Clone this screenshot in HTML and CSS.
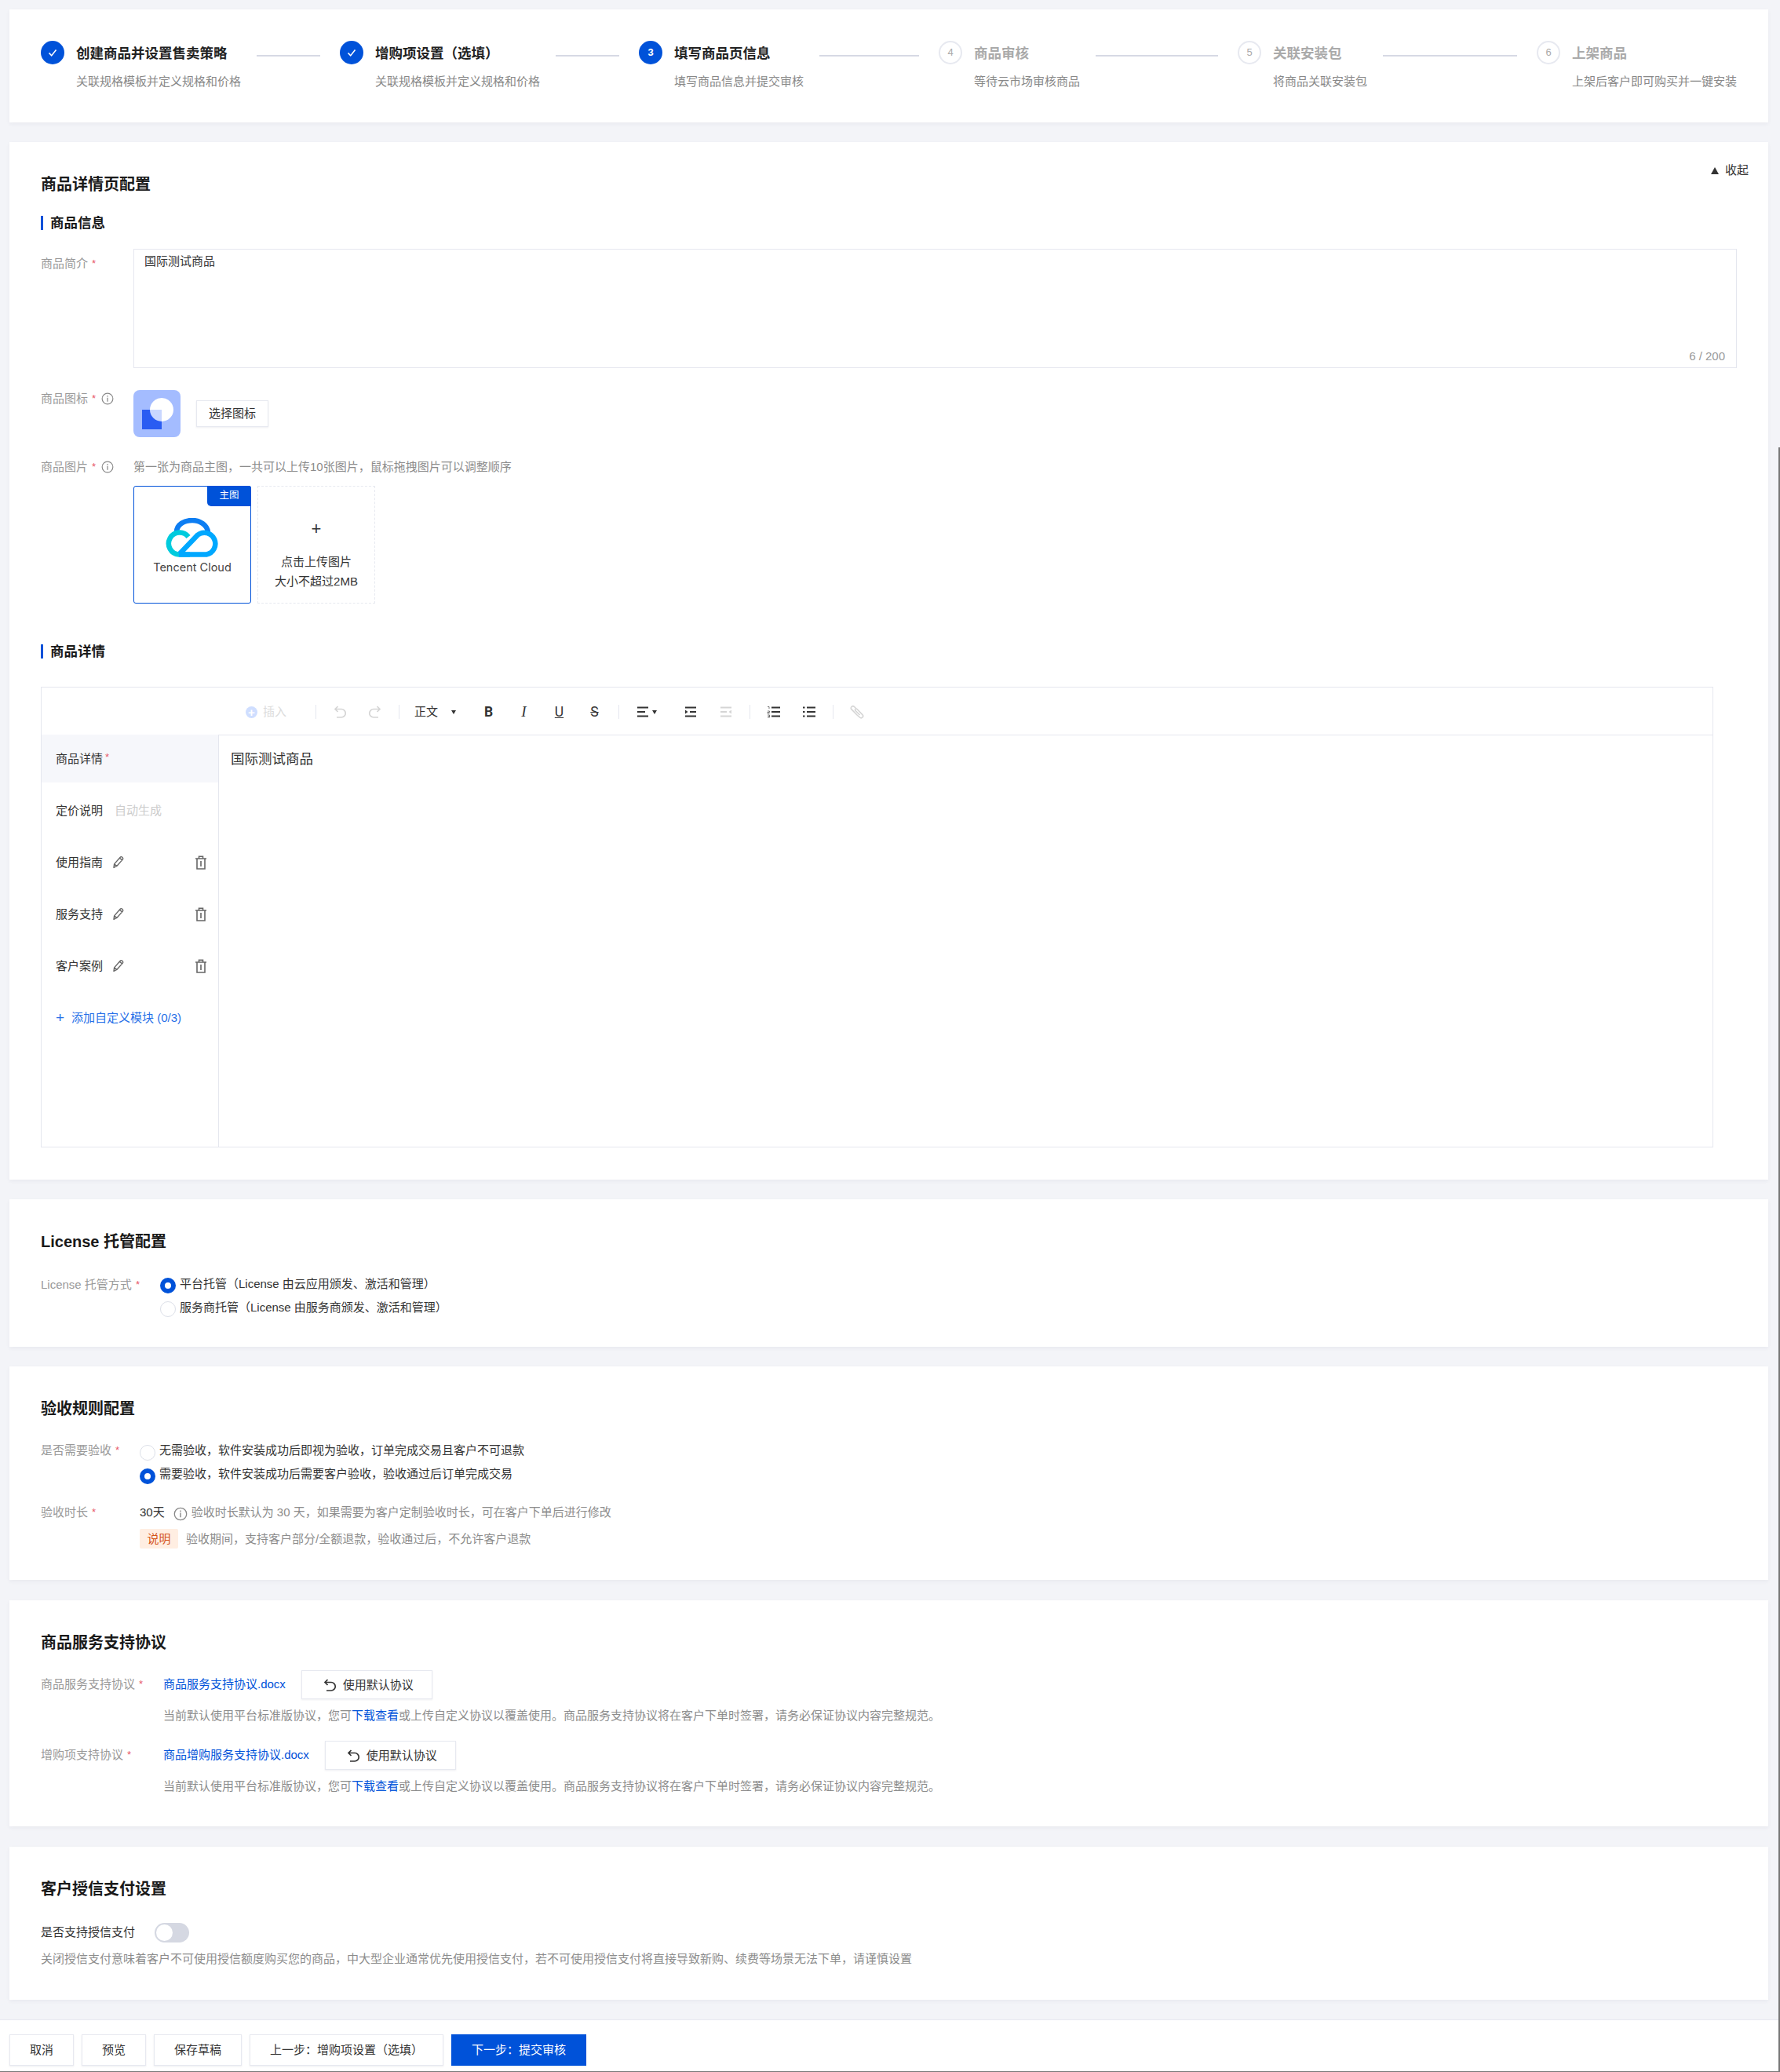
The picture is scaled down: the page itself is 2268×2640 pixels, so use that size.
FILE: index.html
```html
<!DOCTYPE html>
<html lang="zh-CN">
<head>
<meta charset="utf-8">
<title>商品详情页配置</title>
<link rel="stylesheet" href="styles.css">
</head>
<body>
<svg class="sprite" aria-hidden="true">
  <symbol id="i-info" viewBox="0 0 18 18"><circle cx="9" cy="9" r="7.7" fill="none" stroke="currentColor" stroke-width="1.3"/><path d="M9 7.6v5.6M9 4.6v1.6" fill="none" stroke="currentColor" stroke-width="1.4"/></symbol>
  <symbol id="i-pencil" viewBox="0 0 16 17"><path d="M2 15.5l.6-4.6 7.6-8.7a1.6 1.6 0 0 1 2.3-.1l.8.8a1.6 1.6 0 0 1 0 2.2l-7.5 8.4zM2.6 10.9l3.2 2.6M9.4 3.2l3.2 2.7" fill="none" stroke="currentColor" stroke-width="1.4" stroke-linejoin="round"/></symbol>
  <symbol id="i-trash" viewBox="0 0 16 18"><path d="M1 4h14M5.5 4V1.2h5V4M3 4v13h10V4M8 7v7" fill="none" stroke="currentColor" stroke-width="1.6"/></symbol>
  <symbol id="i-undo" viewBox="0 0 18 18"><path d="M6.5 2L3 5.5 6.5 9M3 5.5h8a5 5 0 0 1 0 10.5H5" fill="none" stroke="currentColor" stroke-width="1.7"/></symbol>
  <symbol id="i-redo" viewBox="0 0 18 18"><path d="M11.500 2L15 5.500 11.500 9M15 5.500H7a5 5 0 0 0 0 10.500h6" fill="none" stroke="currentColor" stroke-width="1.700"/></symbol>
  <symbol id="i-check" viewBox="0 0 14 14"><path d="M2.500 7.500l3.200 3.400 5.800-7.300" fill="none" stroke="#fff" stroke-width="1.600"/></symbol>
</svg>

<main class="page">
  <section class="card steps">
    <div class="step"><span class="step-icon done"><svg class="check"><use href="#i-check"/></svg></span><div class="step-text"><div class="step-title">创建商品并设置售卖策略</div><div class="step-desc">关联规格模板并定义规格和价格</div></div></div>
    <i class="step-line line-a"></i>
    <div class="step"><span class="step-icon done"><svg class="check"><use href="#i-check"/></svg></span><div class="step-text"><div class="step-title">增购项设置（选填）</div><div class="step-desc">关联规格模板并定义规格和价格</div></div></div>
    <i class="step-line line-b"></i>
    <div class="step"><span class="step-icon done">3</span><div class="step-text"><div class="step-title">填写商品页信息</div><div class="step-desc">填写商品信息并提交审核</div></div></div>
    <i class="step-line line-c"></i>
    <div class="step todo"><span class="step-icon">4</span><div class="step-text"><div class="step-title">商品审核</div><div class="step-desc">等待云市场审核商品</div></div></div>
    <i class="step-line line-d"></i>
    <div class="step todo"><span class="step-icon">5</span><div class="step-text"><div class="step-title">关联安装包</div><div class="step-desc">将商品关联安装包</div></div></div>
    <i class="step-line line-e"></i>
    <div class="step todo"><span class="step-icon">6</span><div class="step-text"><div class="step-title">上架商品</div><div class="step-desc">上架后客户即可购买并一键安装</div></div></div>
  </section>

  <section class="card detail-card">
    <h2 class="card-title">商品详情页配置</h2>
    <div class="collapse"><span class="tri"></span>收起</div>

    <h3 class="sub-title"><span>商品信息</span></h3>
    <div class="row row-intro">
      <label class="label label-intro">商品简介<em>*</em></label>
      <div class="textarea"><span>国际测试商品</span><span class="counter">6 / 200</span></div>
    </div>
    <div class="row row-icon">
      <label class="label label-icon">商品图标<em>*</em><svg class="info"><use href="#i-info"/></svg></label>
      <div class="app-icon"><svg width="60" height="60" viewBox="0 0 60 60"><circle cx="36" cy="25" r="15" fill="#fff"/><rect x="11" y="25" width="25" height="25" fill="#2a5cf2"/><path d="M21 25h15v15a15 15 0 0 1-15-15z" fill="#c9d7ff"/></svg></div>
      <button class="btn btn-pick">选择图标</button>
    </div>
    <div class="row row-pic">
      <label class="label">商品图片<em>*</em><svg class="info"><use href="#i-info"/></svg></label>
      <div class="pic-col">
        <div class="hint">第一张为商品主图，一共可以上传10张图片，鼠标拖拽图片可以调整顺序</div>
        <div class="pics">
          <div class="pic main-pic">
            <span class="badge">主图</span>
            <svg class="logo" width="68" height="50" viewBox="0 0 68 50">
              <path d="M14 18C14 8 24 3 34 3s19 6 20 15" fill="none" stroke="#0d7df2" stroke-width="6.500"/>
              <path d="M29 24a14 14 0 1 0-12 22.500h14" fill="none" stroke="#00cbdd" stroke-width="6.500"/>
              <path d="M17 46.500h35a14 14 0 1 0-11-25L18 45.500" fill="none" stroke="#00a8ff" stroke-width="6.500"/>
            </svg>
            <span class="logo-text">Tencent Cloud</span>
          </div>
          <div class="pic upload"><span class="plus">+</span><span>点击上传图片</span><span>大小不超过2MB</span></div>
        </div>
      </div>
    </div>

    <h3 class="sub-title sub-detail"><span>商品详情</span></h3>
    <div class="editor">
      <div class="toolbar">
        <span class="tb-insert"><span class="plus-dot">+</span>插入</span><i class="sep"></i>
        <span class="tool off"><svg class="tb-svg"><use href="#i-undo"/></svg></span>
        <span class="tool off"><svg class="tb-svg"><use href="#i-redo"/></svg></span><i class="sep"></i>
        <span class="tb-format">正文<i class="caret"></i></span>
        <span class="tool glyph bold">B</span>
        <span class="tool glyph ital">I</span>
        <span class="tool glyph under">U</span>
        <span class="tool glyph strike">S</span><i class="sep"></i>
        <span class="tb-align"><svg class="tb-svg" viewBox="0 0 18 18"><path d="M2 3.500h14M2 9h10M2 14.500h14" stroke="#333" stroke-width="2"/></svg><i class="caret"></i></span>
        <span class="tool"><svg class="tb-svg" viewBox="0 0 18 18"><path d="M2 3.500h14M8 9h8M2 14.500h14" stroke="#333" stroke-width="2"/><path d="M2 6.500L5.500 9 2 11.500z" fill="#333"/></svg></span>
        <span class="tool off"><svg class="tb-svg" viewBox="0 0 18 18"><path d="M2 3.500h14M2 9h8M2 14.500h14" stroke="currentColor" stroke-width="2"/><path d="M16 6.500L12.500 9 16 11.500z" fill="currentColor"/></svg></span><i class="sep"></i>
        <span class="tool"><svg class="tb-svg" viewBox="0 0 18 18"><path d="M6 3.500h11M6 9h11M6 14.500h11" stroke="#333" stroke-width="2"/><path d="M1 2.500h2v2.500M1 8h2.500v1.500H1V11h2.500M1 13h2.500v3H1M1.500 14.500h2" fill="none" stroke="#555" stroke-width=".8"/></svg></span>
        <span class="tool"><svg class="tb-svg" viewBox="0 0 18 18"><path d="M6 3.500h11M6 9h11M6 14.500h11M1 3.500h2.500M1 9h2.500M1 14.500h2.500" stroke="#333" stroke-width="2"/></svg></span><i class="sep"></i>
        <span class="tool off"><svg class="tb-svg" viewBox="0 0 18 18"><path d="M8 5L5.500 2.500a2.400 2.400 0 0 0-3.400 3.400L9 13l3.500 3a2.400 2.400 0 0 0 3.400-3.400L9 5.500a1.300 1.300 0 0 0-2 2l5.500 5.500" fill="none" stroke="currentColor" stroke-width="1.600"/></svg></span>
      </div>
      <div class="editor-body">
        <nav class="mods">
          <div class="mod active">商品详情<em>*</em></div>
          <div class="mod">定价说明<span class="auto">自动生成</span></div>
          <div class="mod">使用指南<svg class="pencil"><use href="#i-pencil"/></svg><svg class="trash"><use href="#i-trash"/></svg></div>
          <div class="mod">服务支持<svg class="pencil"><use href="#i-pencil"/></svg><svg class="trash"><use href="#i-trash"/></svg></div>
          <div class="mod">客户案例<svg class="pencil"><use href="#i-pencil"/></svg><svg class="trash"><use href="#i-trash"/></svg></div>
          <div class="mod add"><span class="add-plus">+</span>添加自定义模块 (0/3)</div>
        </nav>
        <div class="content">国际测试商品</div>
      </div>
    </div>
  </section>

  <section class="card license-card">
    <h2 class="card-title">License 托管配置</h2>
    <div class="row row-top">
      <label class="label label-lic">License 托管方式<em>*</em></label>
      <div class="radios">
        <div class="radio"><i class="dot on"></i><span>平台托管（License 由云应用颁发、激活和管理）</span></div>
        <div class="radio"><i class="dot"></i><span>服务商托管（License 由服务商颁发、激活和管理）</span></div>
      </div>
    </div>
  </section>

  <section class="card accept-card">
    <h2 class="card-title">验收规则配置</h2>
    <div class="row row-top">
      <label class="label label-acc">是否需要验收<em>*</em></label>
      <div class="radios">
        <div class="radio"><i class="dot"></i><span>无需验收，软件安装成功后即视为验收，订单完成交易且客户不可退款</span></div>
        <div class="radio"><i class="dot on"></i><span>需要验收，软件安装成功后需要客户验收，验收通过后订单完成交易</span></div>
      </div>
    </div>
    <div class="row row-days">
      <label class="label label-acc-days">验收时长<em>*</em></label>
      <div>
        <div class="days"><span class="days-val">30天</span><svg class="info-lg"><use href="#i-info"/></svg><span class="hint">验收时长默认为 30 天，如果需要为客户定制验收时长，可在客户下单后进行修改</span></div>
        <div class="note"><span class="tag">说明</span><span class="hint">验收期间，支持客户部分/全额退款，验收通过后，不允许客户退款</span></div>
      </div>
    </div>
  </section>

  <section class="card service-card">
    <h2 class="card-title">商品服务支持协议</h2>
    <div class="agreement">
      <div class="agree-line">
        <label class="label label-svc">商品服务支持协议<em>*</em></label>
        <a class="link">商品服务支持协议.docx</a>
        <button class="btn btn-default"><svg class="undo"><use href="#i-undo"/></svg>使用默认协议</button>
      </div>
      <div class="hint agree-hint">当前默认使用平台标准版协议，您可<a class="link">下载查看</a>或上传自定义协议以覆盖使用。商品服务支持协议将在客户下单时签署，请务必保证协议内容完整规范。</div>
    </div>
    <div class="agreement agreement-2">
      <div class="agree-line">
        <label class="label label-svc">增购项支持协议<em>*</em></label>
        <a class="link">商品增购服务支持协议.docx</a>
        <button class="btn btn-default"><svg class="undo"><use href="#i-undo"/></svg>使用默认协议</button>
      </div>
      <div class="hint agree-hint">当前默认使用平台标准版协议，您可<a class="link">下载查看</a>或上传自定义协议以覆盖使用。商品服务支持协议将在客户下单时签署，请务必保证协议内容完整规范。</div>
    </div>
  </section>

  <section class="card credit-card">
    <h2 class="card-title">客户授信支付设置</h2>
    <div class="credit-line"><span class="credit-label">是否支持授信支付</span><span class="switch"><i></i></span></div>
    <div class="hint credit-hint">关闭授信支付意味着客户不可使用授信额度购买您的商品，中大型企业通常优先使用授信支付，若不可使用授信支付将直接导致新购、续费等场景无法下单，请谨慎设置</div>
  </section>
</main>

<footer class="footer">
  <button class="btn btn-foot">取消</button>
  <button class="btn btn-foot">预览</button>
  <button class="btn btn-foot">保存草稿</button>
  <button class="btn btn-foot">上一步：增购项设置（选填）</button>
  <button class="btn btn-foot primary">下一步：提交审核</button>
</footer>
<div class="scroll-thumb"></div>
</body>
</html>
```

FILE: styles.css
```css
* { box-sizing: border-box; }
html, body { margin: 0; padding: 0; }
body {
  position: relative;
  width: 2268px;
  height: 2640px;
  overflow: hidden;
  background: #f3f4f8;
  color: #333;
  font: 15px/20px "Liberation Sans", "Noto Sans CJK SC", sans-serif;
}
.sprite { position: absolute; width: 0; height: 0; }
.page { display: flex; flex-direction: column; gap: 25px; padding: 12px 15px 0 12px; }
.card { position: relative; background: #fff; padding: 38px 40px 0; box-shadow: 0 2px 5px rgba(30, 40, 80, .05); }
em { font-style: normal; color: #e8596a; margin-left: 5px; font-size: 13px; }

/* steps */
.steps { height: 144px; padding-top: 40px; display: flex; align-items: flex-start; }
.step { display: flex; gap: 15px; }
.step-icon {
  flex: none; width: 30px; height: 30px; border-radius: 50%;
  display: flex; align-items: center; justify-content: center;
  border: 2px solid #e7e9f0; color: #aaa; font-size: 13px; background: #fff;
}
.step-icon.done { background: #0052d9; border: 0; color: #fff; font-weight: 700; }
.check { width: 14px; height: 14px; }
.step-title { font-size: 17.5px; line-height: 32px; font-weight: 700; color: #222; white-space: nowrap; }
.step-desc { margin-top: 10px; font-size: 15px; line-height: 20px; color: #888; white-space: nowrap; }
.todo .step-title { color: #aaa; }
.step-line { height: 2px; margin: 18px 25px 0 20px; background: #d6d9e4; flex: none; }
.line-a { width: 81px; }
.line-b { width: 81px; }
.line-c { width: 127px; }
.line-d { width: 156px; }
.line-e { width: 171px; }

/* generic */
.card-title { margin: 0 0 -2px; font-size: 20px; line-height: 32px; font-weight: 700; color: #1a1a1a; }
.collapse { position: absolute; right: 25px; top: 26px; display: flex; align-items: center; color: #333; }
.tri { width: 0; height: 0; margin-right: 8px; border: 5px solid transparent; border-top: 0; border-bottom: 9px solid #333; }
.sub-title { margin: 26px 0 0; height: 18px; display: flex; border-left: 3px solid #0052d9; padding-left: 9px; font-size: 17.5px; line-height: 18px; font-weight: 700; color: #1a1a1a; }
.row { display: flex; }
.label { flex: none; color: #999; white-space: nowrap; display: flex; align-items: flex-start; }
.hint { color: #8c8c8c; white-space: nowrap; }
.info { width: 16px; height: 16px; margin: 2px 0 0 7px; color: #888; }
.btn { font: inherit; color: #333; background: #fff; border: 1px solid #e7e9f0; box-shadow: 0 1px 2px rgba(30, 40, 80, .08); padding: 0; }

/* product info */
.row-intro { margin-top: 24px; }
.label-intro { width: 118px; padding-top: 9px; }
.textarea { position: relative; flex: 1; height: 152px; border: 1px solid #e5e7ef; padding: 5px 13px; color: #333; }
.counter { position: absolute; right: 14px; bottom: 4px; color: #999; }
.row-icon { margin-top: 28px; align-items: center; height: 60px; }
.label-icon { width: 118px; align-self: flex-start; padding-top: 1px; }
.app-icon { width: 60px; height: 60px; border-radius: 8px; background: #a4bcff; overflow: hidden; }
.app-icon svg { display: block; }
.btn-pick { margin-left: 20px; width: 92px; height: 34px; }
.row-pic { margin-top: 28px; }
.row-pic .label { width: 118px; }
.pics { display: flex; gap: 8px; margin-top: 14px; }
.pic { position: relative; width: 150px; height: 150px; display: flex; flex-direction: column; align-items: center; }
.main-pic { border: 1px solid #0052d9; border-radius: 3px; padding-top: 40px; }
.badge { position: absolute; right: -1px; top: -1px; width: 56px; height: 26px; background: #0052d9; color: #fff; font-size: 12.500px; line-height: 24px; text-align: center; border-radius: 0 3px 0 5px; }
.logo { display: block; flex: none; }
.logo-text { margin-top: 2px; font-family: Inter, "Liberation Sans", sans-serif; font-size: 14.500px; line-height: 22px; color: #444; white-space: nowrap; }
.upload { border: 1px dashed #e7e9f0; line-height: 25px; color: #333; }
.plus { margin-top: 39px; margin-bottom: 14px; font-size: 22px; line-height: 30px; font-weight: 300; }
.sub-detail { margin-top: 52px; }

/* editor */
.editor { margin: 36px 30px 41px 0; height: 587px; border: 1px solid #e5e7ef; }
.toolbar { height: 60px; padding: 2px 0 0 260px; display: flex; align-items: center; }
.tb-insert { width: 81px; display: flex; align-items: center; color: #dcdcdc; }
.plus-dot { width: 15px; height: 15px; margin-right: 7px; border-radius: 50%; background: #cfdeff; color: #fff; font-size: 15px; line-height: 15px; text-align: center; font-weight: 700; }
.sep { flex: none; width: 1px; height: 18px; margin: 0 7px 0 8px; background: #e5e7ef; }
.tool { flex: none; width: 45px; display: flex; justify-content: center; align-items: center; color: #333; }
.tool.off { color: #d5d5d5; }
.tb-svg { width: 18px; height: 18px; }
.glyph { font-size: 17.500px; line-height: 20px; }
.bold { font-weight: 700; font-family: Roboto, sans-serif; }
.ital { font-style: italic; font-family: "Liberation Serif", serif; font-size: 19px; }
.under { text-decoration: underline; font-family: Roboto, sans-serif; }
.strike { text-decoration: line-through; font-family: Roboto, sans-serif; }
.tb-format { width: 84px; padding-left: 12px; display: flex; align-items: center; color: #333; }
.caret { width: 0; height: 0; margin-left: 17px; border: 3.500px solid transparent; border-top: 5px solid #333; border-bottom: 0; }
.tb-align { width: 61px; padding-left: 14px; display: flex; align-items: center; }
.tb-align .caret { margin-left: 3px; }
.editor-body { display: flex; height: 525px; }
.mods { width: 225px; flex: none; }
.mod { position: relative; display: flex; align-items: center; height: 61px; margin-bottom: 5px; padding-left: 18px; color: #333; }
.mod.active { background: #f6f7fb; }
.mod em { margin-left: 3px; margin-top: -4px; }
.auto { margin-left: 15px; color: #ccc; }
.pencil { width: 16px; height: 17px; margin-left: 12px; color: #666; }
.trash { width: 16px; height: 18px; margin-left: auto; margin-right: 14px; color: #666; }
.add { color: #266fe8; }
.add-plus { width: 10px; margin-right: 10px; font-size: 19px; line-height: 20px; }
.content { flex: 1; border: solid #e5e7ef; border-width: 1px 0 0 1px; padding: 18px 15px; font-size: 17.500px; line-height: 25px; color: #333; }

/* radios */
.row-top { margin-top: 26px; }
.license-card { height: 188px; }
.accept-card { height: 272px; }
.label-lic { width: 152px; padding-top: 5px; }
.label-acc { width: 126px; padding-top: 3px; }
.label-acc-days { width: 126px; }
.radio { display: flex; align-items: center; height: 30px; white-space: nowrap; color: #333; }
.radio span { padding-bottom: 2px; }
.accept-card .radio span { padding-bottom: 4px; }
.dot { flex: none; width: 20px; height: 20px; margin: 2px 5px 0 0; border-radius: 50%; border: 1px solid #dcdfe8; background: #fff; }
.dot.on { border: 6px solid #0052d9; }
.row-days { margin-top: 22px; }
.days { display: flex; align-items: center; height: 20px; }
.days-val { color: #333; }
.info-lg { width: 18px; height: 18px; margin: 4px 5px 0 11px; color: #888; }
.note { display: flex; align-items: center; margin-top: 11px; }
.tag { height: 25px; padding: 0 9.500px; margin-right: 10px; line-height: 25px; background: #ffeee2; color: #d4541c; border-radius: 2px; }

/* service */
.service-card { height: 288px; margin-top: 1px; }
.agreement { margin-top: 21px; }
.agreement-2 { margin-top: 22px; }
.agree-line { display: flex; align-items: center; height: 37px; }
.label-svc { width: 156px; padding-bottom: 1px; }
.agree-line .link { padding-bottom: 1px; }
.link { color: #0052d9; }
.btn-default { margin-left: 20px; width: 167px; height: 37px; display: flex; align-items: center; padding-left: 26px; }
.undo { width: 18px; height: 18px; margin-right: 8px; color: #333; }
.agree-hint { margin: 11px 0 0 156px; }

/* credit */
.credit-card { height: 195px; margin-top: 1px; }
.credit-line { display: flex; align-items: center; margin-top: 29px; height: 25px; }
.credit-label { width: 145px; padding-bottom: 2px; color: #333; }
.switch { width: 44px; height: 25px; border-radius: 13px; background: #d5d8e2; padding: 2px; }
.switch i { display: block; width: 21px; height: 21px; border-radius: 50%; background: #fff; }
.credit-hint { margin-top: 11px; }

/* footer */
.footer { margin-top: 25px; height: 67px; padding: 18px 12px 0; display: flex; gap: 10px; background: #fff; border-top: 1px solid #e7e9f0; border-bottom: 1px solid #777; }
.btn-foot { height: 40px; padding: 0 25px; white-space: nowrap; }
.primary { background: #0052d9; border-color: #0052d9; color: #fff; }
.scroll-thumb { position: absolute; right: 0; top: 570px; width: 2px; height: 2070px; background: #777; }
```
